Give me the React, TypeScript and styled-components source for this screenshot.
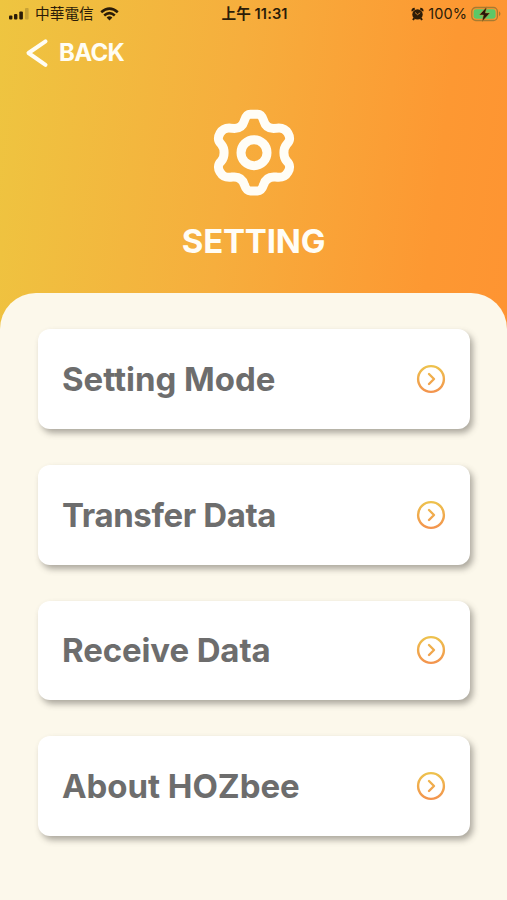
import React from "react";
import styled, { createGlobalStyle } from "styled-components";

const GlobalStyle = createGlobalStyle`
  * { box-sizing: border-box; }
  body { margin: 0; }
`;

const Screen = styled.main`
  display: flex;
  flex-direction: column;
  width: 507px;
  height: 900px;
  overflow: hidden;
  font-family: Inter, "Noto Sans CJK TC", sans-serif;
  background: linear-gradient(97deg, #eec540 0%, #f6ae3d 45%, #fd9832 84%, #fe9432 100%) top / 100% 340px no-repeat;
`;

const StatusBar = styled.header`
  display: grid;
  grid-template-columns: 1fr auto 1fr;
  align-items: center;
  height: 27px;
  padding: 0 6px 0 8px;
  color: #2b1c08;
  font-size: 14px;
  line-height: 20px;
`;

const StatusGroup = styled.div<{ $end?: boolean }>`
  display: flex;
  align-items: center;
  justify-content: ${(p) => (p.$end ? "flex-end" : "flex-start")};
  gap: 4px;
`;

const Carrier = styled.span`
  margin: 0 2px 0 2px;
  font-size: 14.7px;
`;

const Clock = styled.time`
  font-weight: 600;
  font-size: 14.6px;
  letter-spacing: 0.1px;
`;

const Percent = styled.span`
  font-size: 14.5px;
  letter-spacing: 0.1px;
`;

const BackButton = styled.button`
  display: flex;
  align-items: center;
  align-self: flex-start;
  gap: 10px;
  height: 50px;
  padding: 2px 0 0 25px;
  border: 0;
  background: none;
  color: #fffdf4;
  font: 650 24px/30px Inter, sans-serif;
  letter-spacing: -0.65px;
`;

const Hero = styled.section`
  display: flex;
  flex-direction: column;
  align-items: center;
  height: 216px;
  padding-top: 32px;
  color: #fffdf6;
`;

const Title = styled.h1`
  margin: 23px 0 0;
  font-size: 33px;
  font-weight: 650;
  line-height: 42px;
  letter-spacing: -0.2px;
`;

const Panel = styled.nav`
  display: flex;
  flex: 1;
  flex-direction: column;
  gap: 36.1px;
  padding: 36.3px 37px 0 38px;
  border-radius: 36px 36px 0 0;
  background: #fcf8eb;
`;

const MenuItem = styled.button`
  display: flex;
  align-items: center;
  justify-content: space-between;
  height: 99.6px;
  padding: 0 24px;
  border: 0;
  border-radius: 12px;
  background: #fff;
  box-shadow: 3px 4px 6px rgba(70, 65, 60, 0.44);
  color: #6d6d6d;
  font: 700 33px/42px Inter, sans-serif;
`;

const Label = styled.span<{ $spacing: number }>`
  white-space: nowrap;
  letter-spacing: ${(p) => p.$spacing}px;
`;

const SignalIcon = () => (
  <svg width="21" height="13" viewBox="0 0 21 13" fill="currentColor">
    <rect x="1" y="8.5" width="3.4" height="4" rx="1" />
    <rect x="6" y="7" width="3.4" height="5.5" rx="1" />
    <rect x="11.3" y="4.5" width="3.6" height="8" rx="1" />
    <rect x="17" y="1" width="3.6" height="11.5" rx="1" opacity=".2" />
  </svg>
);

const WifiIcon = () => (
  <svg width="19" height="14" viewBox="0 0 19 14" fill="none" stroke="currentColor" strokeWidth="2.6">
    <path d="M1.2 5.2Q9.5-2 17.8 5.2M4.2 8.4Q9.5 4 14.8 8.4" />
    <path d="M6.6 10.5Q9.5 8.2 12.4 10.5L9.5 13.4Z" fill="currentColor" stroke="none" />
  </svg>
);

const AlarmIcon = () => (
  <svg width="13" height="14" viewBox="0 0 13 14" fill="currentColor">
    <circle cx="6.5" cy="7.4" r="5.2" />
    <path d="M1.5 4.2Q1 2 3.8 1.7M11.5 4.2Q12 2 9.2 1.7M3.3 11 2 13M9.7 11l1.3 2" fill="none" stroke="currentColor" strokeWidth="2" />
    <path d="M4 5.5 6.5 7.7 9.2 5.8" fill="none" stroke="#f49a36" strokeWidth=".8" />
  </svg>
);

const BatteryIcon = () => (
  <svg width="30" height="16" viewBox="0 0 30 16">
    <rect x=".8" y="1.5" width="25.6" height="13" rx="4" fill="none" stroke="#a77b31" strokeWidth="1.3" />
    <rect x="2.6" y="3.3" width="22" height="9.4" rx="2.4" fill="#5bc867" />
    <path d="M28 5.3q3 2.4 0 5z" fill="#a77b31" />
    <path d="M15.8.8 8.2 9h4.2l-1.4 6.7 8-8.8h-4.6z" fill="#24160b" stroke="#d99835" strokeWidth=".5" />
  </svg>
);

const BackIcon = () => (
  <svg width="24" height="30" viewBox="0 0 24 30" fill="none" stroke="currentColor" strokeWidth="4" strokeLinecap="round" strokeLinejoin="round">
    <path d="M20.5 3.3 3.5 15l17 11.8" />
  </svg>
);

const GearIcon = () => (
  <svg width="84" height="88" viewBox="126 28 252 264" fill="none" stroke="currentColor" strokeWidth="27" strokeLinejoin="round">
    <path d="M241 44H263C273 44 277 51 281 63C286 80 298 88 317 86C336 83 346 87 354 101C362 115 360 124 350 134C339 147 339 171 350 184C360 194 362 203 354 217C346 231 336 235 317 232C298 230 286 238 281 255C277 267 273 274 263 274H241C231 274 227 267 223 255C218 238 206 230 187 232C168 235 158 231 150 217C142 203 144 194 154 184C165 171 165 147 154 134C144 124 142 115 150 101C158 87 168 83 187 86C206 88 218 80 223 63C227 51 231 44 241 44Z" />
    <circle cx="252" cy="159" r="39" />
  </svg>
);

const ArrowIcon = () => (
  <svg width="30" height="30" viewBox="0 0 30 30" fill="none" stroke="url(#arrow-gradient)" strokeWidth="2.4">
    <defs>
      <linearGradient id="arrow-gradient" x1="0" y1="1" x2="0" y2="29" gradientUnits="userSpaceOnUse">
        <stop stopColor="#edc34d" />
        <stop offset="1" stopColor="#f3924d" />
      </linearGradient>
    </defs>
    <circle cx="15" cy="15" r="12.9" />
    <path d="m13 10 5 5-5 5" strokeLinecap="round" strokeLinejoin="round" />
  </svg>
);

const items = [
  { label: "Setting Mode", spacing: -0.04 },
  { label: "Transfer Data", spacing: -0.38 },
  { label: "Receive Data", spacing: -0.12 },
  { label: "About HOZbee", spacing: -0.05 },
];

export default function App() {
  return (
    <Screen>
      <GlobalStyle />
      <StatusBar>
        <StatusGroup>
          <SignalIcon />
          <Carrier>中華電信</Carrier>
          <WifiIcon />
        </StatusGroup>
        <Clock>上午 11:31</Clock>
        <StatusGroup $end>
          <AlarmIcon />
          <Percent>100%</Percent>
          <BatteryIcon />
        </StatusGroup>
      </StatusBar>
      <BackButton>
        <BackIcon />
        BACK
      </BackButton>
      <Hero>
        <GearIcon />
        <Title>SETTING</Title>
      </Hero>
      <Panel>
        {items.map((item) => (
          <MenuItem key={item.label}>
            <Label $spacing={item.spacing}>{item.label}</Label>
            <ArrowIcon />
          </MenuItem>
        ))}
      </Panel>
    </Screen>
  );
}
